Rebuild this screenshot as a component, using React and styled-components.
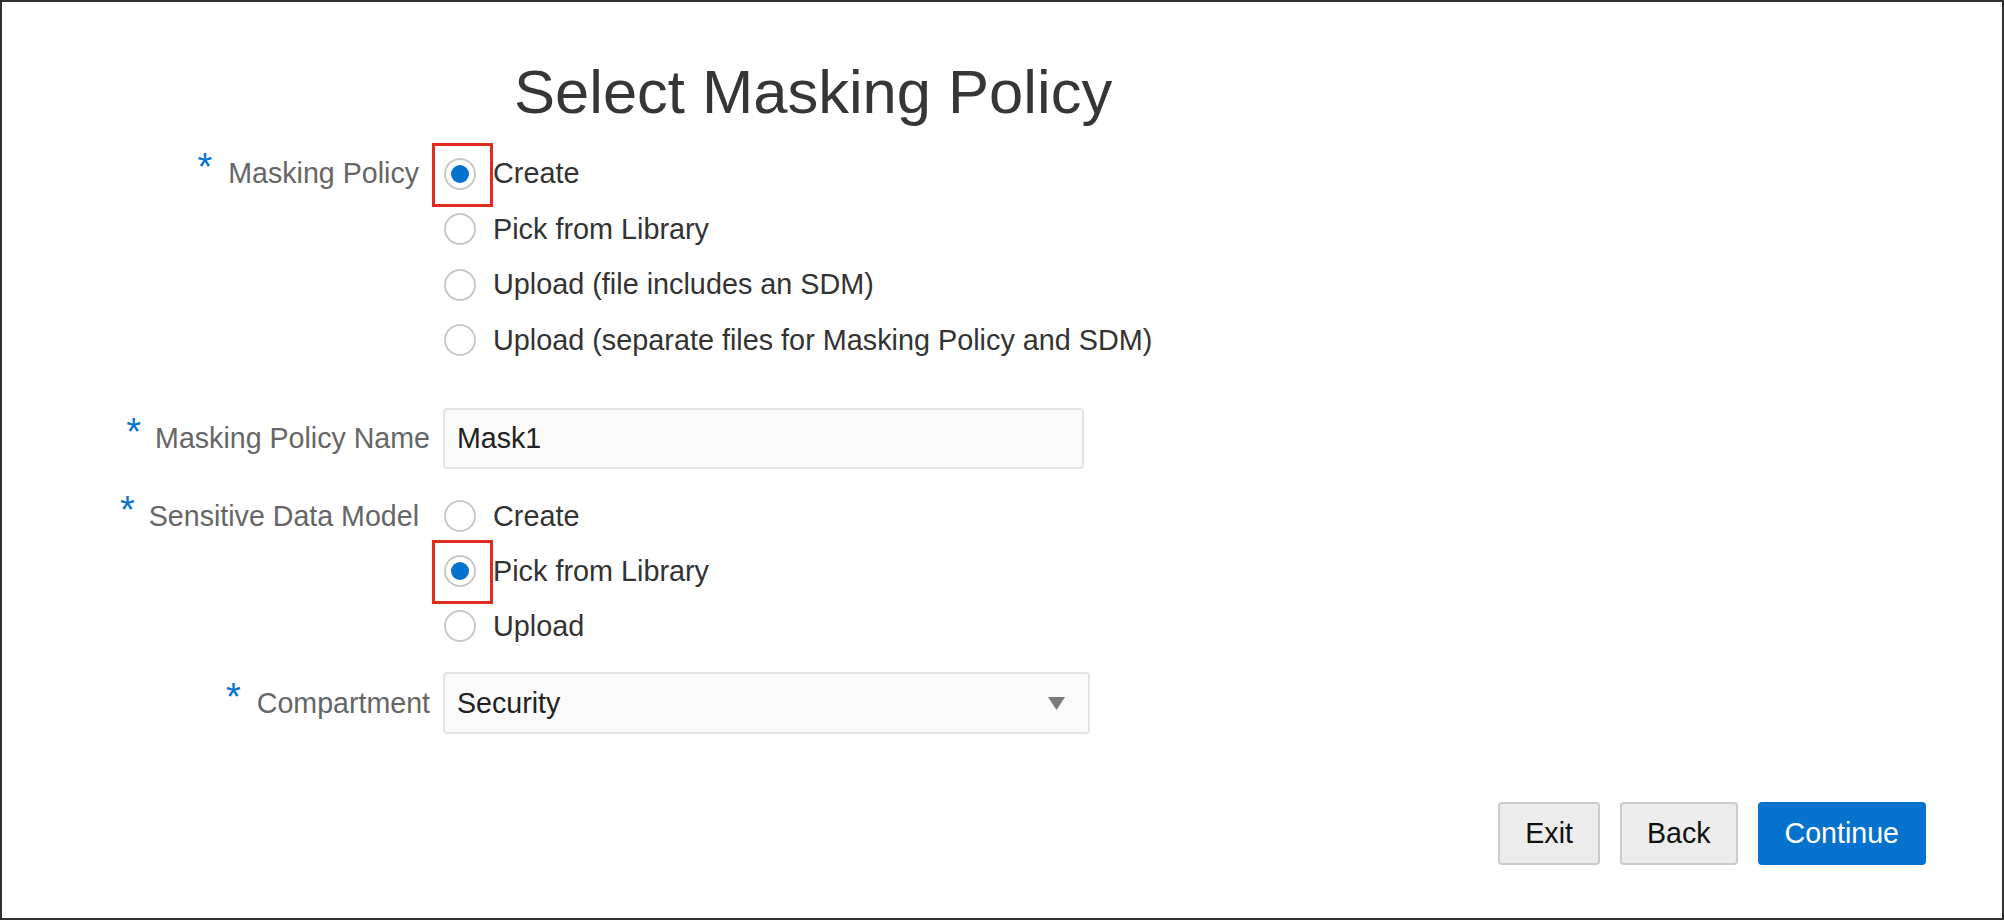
import React from "react";
import styled, { createGlobalStyle } from "styled-components";

const GlobalStyle = createGlobalStyle`
  html, body {
    margin: 0;
    padding: 0;
    background: #fff;
  }
  body {
    font-family: "Liberation Sans", Arial, sans-serif;
  }
  * {
    box-sizing: border-box;
  }
`;

const Page = styled.div`
  width: 2004px;
  height: 920px;
  border: 2px solid #303030;
  background: #fff;
  display: flex;
  flex-direction: column;
  padding-top: 54px;
  font-size: 28.6px;
  color: #333;
`;

const Title = styled.h1`
  margin: 0 0 0 512px;
  font-size: 61.5px;
  line-height: 72px;
  font-weight: 400;
  color: #363636;
`;

const FieldRow = styled.div`
  display: grid;
  grid-template-columns: 428px auto;
  column-gap: 13px;
  align-items: start;
  margin-top: ${(p) => p.$mt}px;
`;

const Label = styled.div`
  display: flex;
  justify-content: flex-end;
  align-items: baseline;
  padding-right: ${(p) => p.$pr || 0}px;
  line-height: ${(p) => p.$lh}px;
  color: #666;
  white-space: nowrap;
`;

const Required = styled.span`
  color: #0572ce;
  font-size: 38px;
  line-height: 1;
  margin-right: ${(p) => p.$gap || 14}px;
  transform: translateY(-3px);
`;

const RadioGroup = styled.div`
  display: flex;
  flex-direction: column;
`;

const RadioOption = styled.label`
  display: flex;
  align-items: center;
  gap: 17px;
  height: ${(p) => p.$h}px;
  padding-left: 1px;
  color: #333;
  font-size: 28.8px;
  white-space: nowrap;
`;

const RadioCircle = styled.span`
  position: relative;
  width: 32px;
  height: 32px;
  border-radius: 50%;
  border: 2px solid #c8c8c8;
  background: #fff;
  display: grid;
  place-items: center;
  flex-shrink: 0;

  &::before {
    content: "";
    display: ${(p) => (p.$checked ? "block" : "none")};
    width: 18px;
    height: 18px;
    border-radius: 50%;
    background: #0572ce;
  }

  /* red annotation frame drawn over the radio */
  &::after {
    content: "";
    display: ${(p) => (p.$marked ? "block" : "none")};
    position: absolute;
    top: -17px;
    left: -14px;
    width: 55px;
    height: 58px;
    border: 3px solid #e02b20;
  }
`;

const TextField = styled.input`
  width: 641px;
  height: 61px;
  margin: 0;
  padding: 0 0 0 12px;
  background: #fafafa;
  border: 2px solid #e4e4e4;
  border-radius: 4px;
  font-family: inherit;
  font-size: 28.6px;
  color: #222;
  outline: none;
`;

const SelectBox = styled.div`
  width: 647px;
  height: 62px;
  padding: 0 23px 0 12px;
  background: #fafafa;
  border: 2px solid #e4e4e4;
  border-radius: 4px;
  display: flex;
  align-items: center;
  justify-content: space-between;
  color: #222;
`;

const ButtonBar = styled.div`
  display: flex;
  justify-content: flex-end;
  gap: 20px;
  margin-top: 68px;
  padding-right: 76px;
`;

const Button = styled.button`
  height: 63px;
  padding: 0 25px;
  border-radius: 4px;
  border: 2px solid ${(p) => (p.$primary ? "#0572ce" : "#cbcbcb")};
  background: ${(p) => (p.$primary ? "#0572ce" : "#ececec")};
  color: ${(p) => (p.$primary ? "#fff" : "#111")};
  font-family: inherit;
  font-size: 28.6px;
  cursor: pointer;
`;

const Radio = ({ label, checked, marked, h }) => (
  <RadioOption $h={h}>
    <RadioCircle $checked={checked} $marked={marked} />
    {label}
  </RadioOption>
);

const policyOptions = [
  "Create",
  "Pick from Library",
  "Upload (file includes an SDM)",
  "Upload (separate files for Masking Policy and SDM)",
];

const sdmOptions = ["Create", "Pick from Library", "Upload"];

export default function App() {
  return (
    <>
      <GlobalStyle />
      <Page>
        <Title>Select Masking Policy</Title>

        <FieldRow $mt={18}>
          <Label $lh={55.5} $pr={11}>
            <Required $gap={16}>*</Required>Masking Policy
          </Label>
          <RadioGroup>
            {policyOptions.map((o, i) => (
              <Radio
                key={o}
                label={o}
                h={55.5}
                checked={i === 0}
                marked={i === 0}
              />
            ))}
          </RadioGroup>
        </FieldRow>

        <FieldRow $mt={40}>
          <Label $lh={61}>
            <Required>*</Required>Masking Policy Name
          </Label>
          <TextField defaultValue="Mask1" readOnly />
        </FieldRow>

        <FieldRow $mt={19.5}>
          <Label $lh={55} $pr={11}>
            <Required>*</Required>Sensitive Data Model
          </Label>
          <RadioGroup>
            {sdmOptions.map((o, i) => (
              <Radio
                key={o}
                label={o}
                h={55}
                checked={i === 1}
                marked={i === 1}
              />
            ))}
          </RadioGroup>
        </FieldRow>

        <FieldRow $mt={18.5}>
          <Label $lh={62}>
            <Required $gap={16}>*</Required>Compartment
          </Label>
          <SelectBox>
            <span>Security</span>
            <svg width="17" height="13" viewBox="0 0 17 13">
              <polygon points="0,0 17,0 8.5,13" fill="#7a7a7a" />
            </svg>
          </SelectBox>
        </FieldRow>

        <ButtonBar>
          <Button>Exit</Button>
          <Button>Back</Button>
          <Button $primary>Continue</Button>
        </ButtonBar>
      </Page>
    </>
  );
}
